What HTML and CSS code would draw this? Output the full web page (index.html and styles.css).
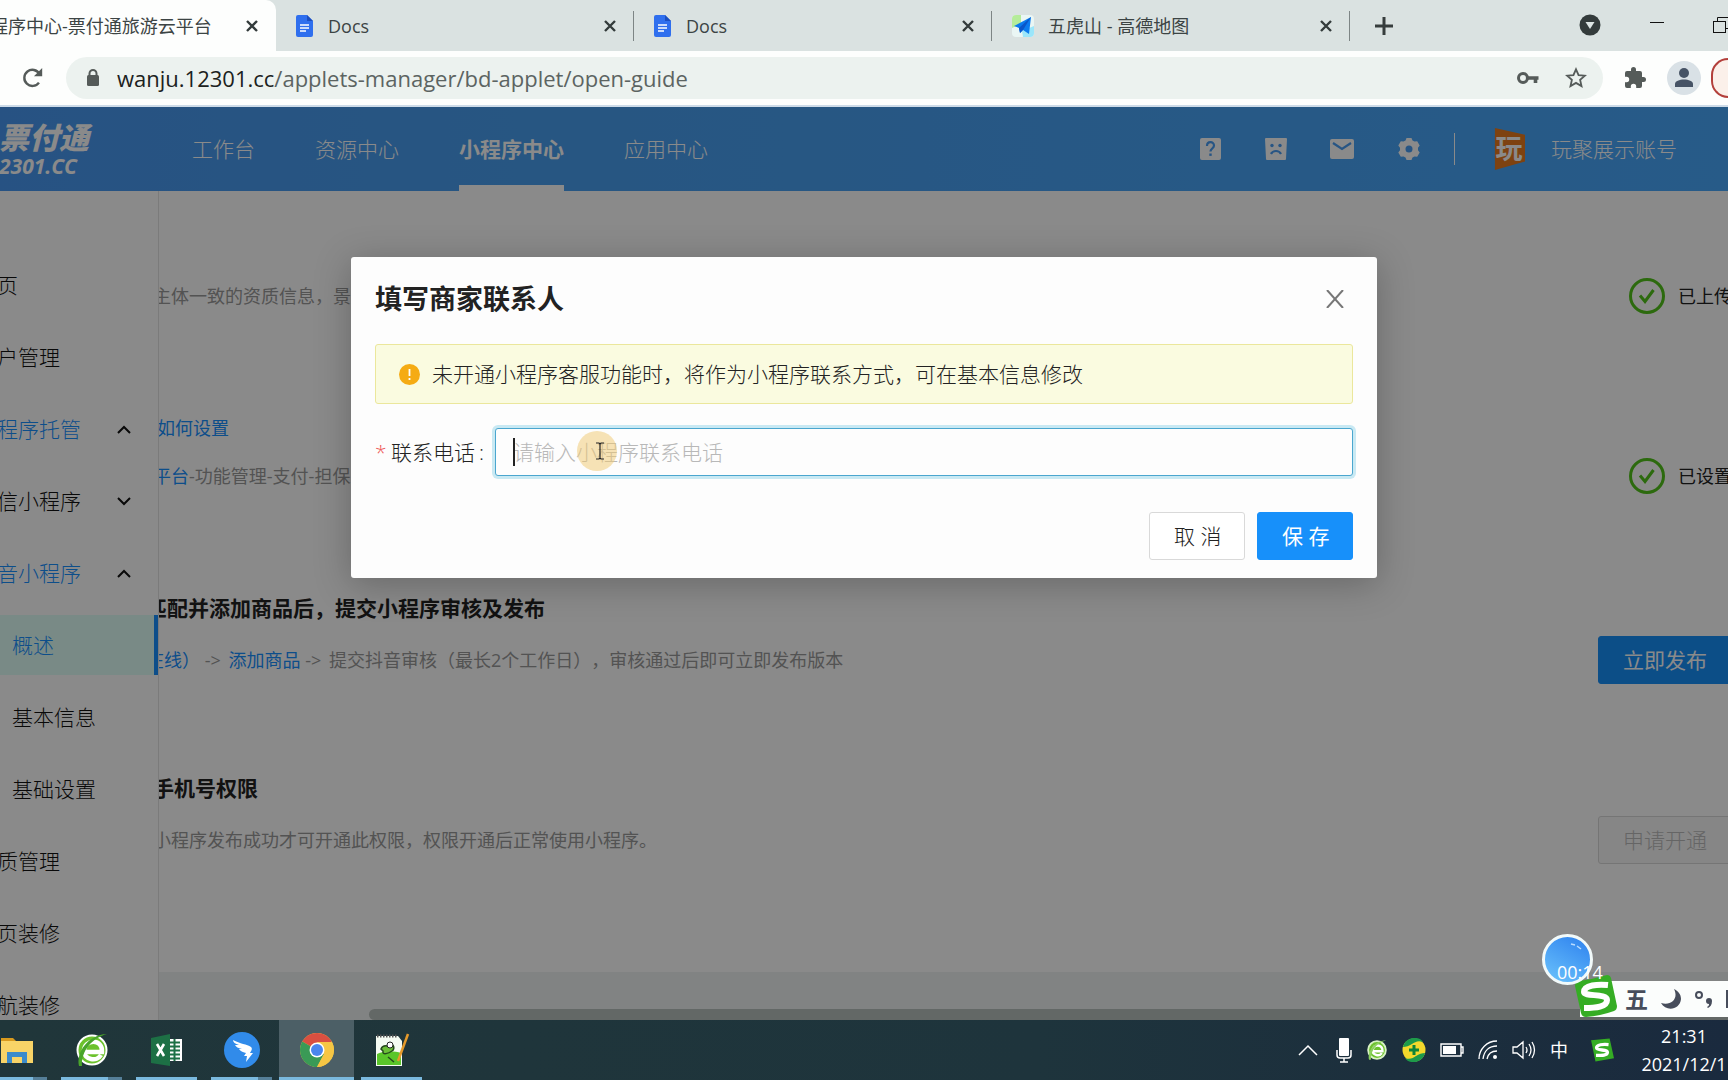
FILE: index.html
```html
<!DOCTYPE html>
<html lang="zh-CN">
<head>
<meta charset="utf-8">
<title>小程序中心-票付通旅游云平台</title>
<link rel="stylesheet" href="styles.css">
</head>
<body>
<header class="tabs">
  <div class="tab tab-active"><span class="tab-title">程序中心-票付通旅游云平台</span><button class="tab-close" aria-label="关闭"><svg width="12" height="12" viewBox="0 0 12 12"><path d="M1 1l10 10M11 1L1 11"/></svg></button></div>
  <div class="tab"><svg width="18" height="22" viewBox="0 0 18 22"><path d="M2 0h9l6 6v14a2 2 0 0 1-2 2H2a2 2 0 0 1-2-2V2a2 2 0 0 1 2-2z" fill="#2f6fee"/><path d="M11 0l6 6h-6z" fill="#1c4fc0"/><path d="M4 10h9M4 13h9M4 16h6" stroke="#fff" stroke-width="1.5"/></svg><span class="tab-title">Docs</span><button class="tab-close" aria-label="关闭"><svg width="12" height="12" viewBox="0 0 12 12"><path d="M1 1l10 10M11 1L1 11"/></svg></button></div>
  <div class="tab"><svg width="18" height="22" viewBox="0 0 18 22"><path d="M2 0h9l6 6v14a2 2 0 0 1-2 2H2a2 2 0 0 1-2-2V2a2 2 0 0 1 2-2z" fill="#2f6fee"/><path d="M11 0l6 6h-6z" fill="#1c4fc0"/><path d="M4 10h9M4 13h9M4 16h6" stroke="#fff" stroke-width="1.5"/></svg><span class="tab-title">Docs</span><button class="tab-close" aria-label="关闭"><svg width="12" height="12" viewBox="0 0 12 12"><path d="M1 1l10 10M11 1L1 11"/></svg></button></div>
  <div class="tab"><svg width="22" height="22" viewBox="0 0 22 22"><rect width="22" height="22" rx="4" fill="#eaf6f4"/><path d="M4 0h5v9l-9 4V4a4 4 0 0 1 4-4z" fill="#b5ec9a"/><path d="M10 16l12-5v7a4 4 0 0 1-4 4h-7z" fill="#9be6fa"/><path d="M19 2L2 11l5 2 1 5 3-3 6 4z" fill="#0b7bee"/><path d="M19 2L7 13l1 5 3-3z" fill="#0a56c8"/></svg><span class="tab-title">五虎山 - 高德地图</span><button class="tab-close" aria-label="关闭"><svg width="12" height="12" viewBox="0 0 12 12"><path d="M1 1l10 10M11 1L1 11"/></svg></button></div>
  <button class="new-tab" aria-label="新标签页"><svg width="18" height="18" viewBox="0 0 18 18"><path d="M9 0v18M0 9h18" stroke="#363d3d" stroke-width="3"/></svg></button>
  <div class="window-controls">
    <button aria-label="搜索标签页"><svg width="22" height="22" viewBox="0 0 22 22"><circle cx="11" cy="11" r="10.5" fill="#333b3b"/><path d="M6.500 8h9L11 15z" fill="#dde5e4"/></svg></button>
    <button aria-label="最小化"><svg width="16" height="16" viewBox="0 0 16 16"><path d="M1 5.500h14" stroke="#111" stroke-width="1"/></svg></button>
    <button aria-label="还原"><svg width="18" height="16" viewBox="0 0 18 16" fill="none" stroke="#111"><rect x=".5" y="4.500" width="12" height="11"/><path d="M4.500 4V.5h13v11H13"/></svg></button>
  </div>
</header>
<div class="toolbar">
  <button class="reload" aria-label="重新加载"><svg width="22" height="22" viewBox="0 0 24 24"><path d="M18.500 17A8.800 8.800 0 1 1 19 7.500" fill="none" stroke="#555b59" stroke-width="2.600"/><path d="M22 1v9h-9z" fill="#555b59"/></svg></button>
  <div class="omnibox">
    <svg width="14" height="18" viewBox="0 0 14 18"><rect x="1" y="6" width="12" height="11" rx="1.500" fill="#555b59"/><path d="M3.500 7V4.500a3.500 3.500 0 0 1 7 0V7" fill="none" stroke="#555b59" stroke-width="2"/></svg>
    <span class="url"><b>wanju.12301.cc</b>/applets-manager/bd-applet/open-guide</span>
    <svg width="22" height="14" viewBox="0 0 22 14"><circle cx="6" cy="7" r="4.500" fill="none" stroke="#555b59" stroke-width="3"/><path d="M10 7h11.500M18.500 7v5" stroke="#555b59" stroke-width="3.600" fill="none"/></svg>
    <svg width="22" height="22" viewBox="0 0 24 24"><path d="M12 2.500l2.800 6.300 6.900.7-5.200 4.600 1.500 6.700-6-3.500-6 3.500 1.500-6.700-5.200-4.600 6.900-.7z" fill="none" stroke="#555b59" stroke-width="2"/></svg>
  </div>
  <svg width="24" height="24" viewBox="0 0 24 24"><path d="M20.500 11H19V7a2 2 0 0 0-2-2h-4V3.500a2.500 2.500 0 0 0-5 0V5H4a2 2 0 0 0-2 2v3.800h1.500a2.700 2.700 0 0 1 0 5.400H2V20a2 2 0 0 0 2 2h3.800v-1.500a2.700 2.700 0 0 1 5.400 0V22H17a2 2 0 0 0 2-2v-4h1.500a2.500 2.500 0 0 0 0-5z" fill="#555b59"/></svg>
  <svg width="34" height="34" viewBox="0 0 34 34"><circle cx="17" cy="17" r="17" fill="#d9e1e6"/><circle cx="17" cy="12" r="5" fill="#465365"/><path d="M8 26v-3c0-6 18-6 18 0v3z" fill="#465365"/></svg>
  <span class="update"></span>
</div>
<div class="viewport">
  <div class="app">
    <nav class="topnav">
      <div class="brand"><strong>票付通</strong><span>2301.CC</span></div>
      <a href="#">工作台</a><a href="#">资源中心</a><a href="#" class="current">小程序中心</a><a href="#">应用中心</a>
      <div class="tools">
        <svg width="22" height="22" viewBox="0 0 22 22"><rect width="21" height="22" rx="2" fill="#fff"/><path d="M7 8c0-5 7-5 7-.5 0 3-3.500 3-3.500 6" fill="none" stroke="#489df4" stroke-width="2.200"/><rect x="9.300" y="15.500" width="2.400" height="2.400" fill="#489df4"/></svg>
        <svg width="22" height="22" viewBox="0 0 22 22"><path d="M1 0h20a1 1 0 0 1 1 1l-1 20a1 1 0 0 1-1 1H2a1 1 0 0 1-1-1L0 1a1 1 0 0 1 1-1z" fill="#fff"/><g fill="#489df4"><circle cx="7" cy="7.500" r="1.700"/><circle cx="15" cy="7.500" r="1.700"/></g><path d="M6 16c2-4 8-4 10 0" fill="none" stroke="#489df4" stroke-width="2.200"/></svg>
        <svg width="24" height="20" viewBox="0 0 24 20"><rect width="24" height="20" rx="2" fill="#fff"/><path d="M3 4l9 6 9-6" fill="none" stroke="#489df4" stroke-width="2.200"/></svg>
        <svg width="24" height="24" viewBox="0 0 24 24"><path d="M9.500 1h5l1 2.500 2 1 2.700-.3 2.500 4.200L21 10.700v2.600l1.700 2.300-2.500 4.200-2.700-.3-2 1-1 2.500h-5l-1-2.500-2-1-2.700.3-2.500-4.200L3 13.300v-2.600L1.300 8.400l2.500-4.200 2.700.3 2-1z" fill="#fff"/><circle cx="12" cy="12" r="3.500" fill="#489df4"/></svg>
      </div>
      <div class="account"><span class="shop">玩</span>玩聚展示账号</div>
    </nav>
    <div class="body">
      <aside class="side">
        <a href="#">页</a>
        <a href="#">户管理</a>
        <a href="#" class="open">程序托管<svg width="14" height="9" viewBox="0 0 14 9"><path d="M1 8l6-6 6 6"/></svg></a>
        <a href="#">信小程序<svg width="14" height="9" viewBox="0 0 14 9"><path d="M1 1l6 6 6-6"/></svg></a>
        <a href="#" class="open">音小程序<svg width="14" height="9" viewBox="0 0 14 9"><path d="M1 8l6-6 6 6"/></svg></a>
        <a href="#" class="sub selected">概述</a>
        <a href="#" class="sub">基本信息</a>
        <a href="#" class="sub">基础设置</a>
        <a href="#">质管理</a>
        <a href="#">页装修</a>
        <a href="#">航装修</a>
      </aside>
      <main class="content">
        <div class="card">
          <section class="step compact">
            <h3></h3>
            <p>主体一致的资质信息，景</p>
            <div class="status"><svg width="36" height="36" viewBox="0 0 36 36"><circle cx="18" cy="18" r="16.500"/><path d="M11 17.500l5 6 8.500-11.500"/></svg>已上传</div>
          </section>
          <section class="step compact">
            <h3><a href="#">如何设置</a></h3>
            <p><a href="#">平台</a>-功能管理-支付-担保</p>
            <div class="status"><svg width="36" height="36" viewBox="0 0 36 36"><circle cx="18" cy="18" r="16.500"/><path d="M11 17.500l5 6 8.500-11.500"/></svg>已设置</div>
          </section>
          <section class="step outdent">
            <h3>匹配并添加商品后，提交小程序审核及发布</h3>
            <p><a href="#">在线）</a> <span class="arrow">-&gt;</span> <a href="#">添加商品</a> <span class="arrow">-&gt;</span> 提交抖音审核（最长2个工作日），审核通过后即可立即发布版本</p>
            <button class="btn primary">立即发布</button>
          </section>
          <section class="step">
            <h3>手机号权限</h3>
            <p>小程序发布成功才可开通此权限，权限开通后正常使用小程序。</p>
            <button class="btn disabled" disabled>申请开通</button>
          </section>
        </div>
      </main>
    </div>
  </div>
  <div class="hscroll"></div>
  <div class="mask">
    <form class="modal" role="dialog" aria-labelledby="dlg-title">
      <div class="modal-head"><h2 id="dlg-title">填写商家联系人</h2><button type="button" class="close" aria-label="关闭"><svg width="18" height="18" viewBox="0 0 18 18"><path d="M1 0l16 18M17 0L1 18"/></svg></button></div>
      <div class="alert"><svg width="21" height="21" viewBox="0 0 21 21"><circle cx="10.500" cy="10.500" r="10.500" fill="#f5ab14"/><path d="M10.500 5v7M10.500 14v2" stroke="#fff" stroke-width="1.800"/></svg>未开通小程序客服功能时，将作为小程序联系方式，可在基本信息修改</div>
      <div class="field"><label for="phone"><i>*</i>联系电话<em>:</em></label>
        <div class="control"><input id="phone" type="text" placeholder="请输入小程序联系电话"><span class="caret"></span><span class="pointer"><svg width="8" height="18" viewBox="0 0 8 18"><path d="M0 1h3l1 1 1-1h3M0 17h3l1-1 1 1h3M4 2v14" fill="none" stroke="#222" stroke-width="1.200"/></svg></span></div></div>
      <div class="actions"><button type="button" class="btn">取 消</button><button type="button" class="btn primary">保 存</button></div>
    </form>
  </div>
  <div class="recorder"><svg width="45" height="45" viewBox="0 0 45 45"><path d="M26 7l4 1M32 9l4 3" stroke="#b9dcff" stroke-width="1.500"/></svg><span>00:14</span></div>
  <div class="ime">
    <svg class="ime-logo" width="44" height="42" viewBox="0 0 44 42"><path d="M5 6Q20 4 33 0q3 0 4 3l6 28q0 4-3 5-14 5-28 6-4 0-5-4L1 11q0-4 4-5z" fill="#35ad24"/><path d="M34 10c-10-1-24 0-24 7 0 5 23 1 23 8 0 7-11 8-23 8" fill="none" stroke="#fff" stroke-width="6"/></svg>
    <b>五</b>
    <svg width="22" height="22" viewBox="0 0 22 22"><path d="M14 1c5 10-3 17-13 14 5 9 19 7 20-4 0-5-3-8-7-10z" fill="#474d5b"/></svg>
    <svg width="20" height="18" viewBox="0 0 20 18"><circle cx="5" cy="5" r="3" fill="none" stroke="#474d5b" stroke-width="2"/><path d="M13 17c2-1 2-2 2-3a3 3 0 1 1 3-3c0 4-2 6-4 7z" fill="#474d5b"/></svg>
    <svg width="8" height="18" viewBox="0 0 8 18"><path d="M8 1H1v16h7M4 5h4M4 9h4M4 13h4" fill="none" stroke="#474d5b" stroke-width="2"/></svg>
  </div>
</div>
<footer class="taskbar">
  <div class="apps">
    <button class="multi" aria-label="文件资源管理器"><svg width="36" height="36" viewBox="0 0 36 36"><path d="M2 6h12l3 3H2z" fill="#d89a1e"/><path d="M2 9h32v22H2z" fill="#f8d467"/><path d="M8 31V20h20v11h-5v-6h-10v6z" fill="#3b8bcb"/></svg></button>
    <button class="multi" aria-label="浏览器"><svg width="36" height="36" viewBox="0 0 36 36"><circle cx="18" cy="18" r="14.500" fill="#6cc22c" stroke="#fff" stroke-width="2"/><path d="M9 20h19c1-14-18-13-18-1 0 9 13 11 17 4" fill="none" stroke="#fff" stroke-width="4.500"/><path d="M5 34C2 20 14 3 33 2 18 6 7 19 8 34z" fill="#49a52b"/></svg></button>
    <button aria-label="Excel"><svg width="36" height="36" viewBox="0 0 36 36"><rect x="20" y="7" width="13" height="22" fill="#fff"/><path d="M20 10.500h11M20 14.500h11M20 18.500h11M20 22.500h11M20 26.500h11M25.500 7v22" stroke="#1d7045" stroke-width="2"/><path d="M2 6l19-4v32L2 31z" fill="#1d7045"/><path d="M8 12l7 12M15 12L8 24" stroke="#fff" stroke-width="2.600"/></svg></button>
    <button class="multi" aria-label="钉钉"><svg width="36" height="36" viewBox="0 0 36 36"><circle cx="18" cy="18" r="18" fill="#318bea"/><path d="M9 8c7 4 14 4 18 7 2 2 0 4-1 6h3l-7 9 1-6h-3l2-3c-5-1-6-3-7-4l3 0c-4-1-6-2-7-4l4 0c-4-1-6-3-6-5z" fill="#fff"/></svg></button>
    <button class="active" aria-label="Chrome"><svg width="36" height="36" viewBox="0 0 36 36"><circle cx="18" cy="18" r="17" fill="#f6c644"/><path d="M18 18L3.300 9.500A17 17 0 0 1 32.700 9.500z" fill="#d94f41"/><path d="M3.300 9.500A17 17 0 0 0 18 35l7-13-7-4z" fill="#3a9a56"/><path d="M18 10h15a17 17 0 0 1-15 25l7-13z" fill="#f6c644"/><circle cx="18" cy="18" r="7.500" fill="#fff"/><circle cx="18" cy="18" r="6" fill="#4a86ee"/></svg></button>
    <button aria-label="Notepad++"><svg width="36" height="36" viewBox="0 0 36 36"><path d="M2 4h22l4 5 0 25H2z" fill="#f5fbf3"/><path d="M3 4h20" stroke="#555" stroke-width="3" stroke-dasharray="1.500 1.500"/><path d="M3 22c8-4 18-3 24-1v12H3z" fill="#5ac62a"/><path d="M7 17c2-5 7-3 9-2 4-5 5 2 2 4s-10 5-9 0zM14 25l6 5" fill="#6bbf38" stroke="#254a1c" stroke-width="1.500"/><circle cx="16" cy="13" r="3" fill="#fff" stroke="#222"/><path d="M34 2L24 29" stroke="#e59a2b" stroke-width="2.500"/></svg></button>
  </div>
  <div class="tray">
    <svg width="20" height="12" viewBox="0 0 20 12"><path d="M1 11l9-9 9 9" fill="none" stroke="#fff" stroke-width="1.500"/></svg>
    <svg width="16" height="26" viewBox="0 0 16 26"><rect x="3" y="1" width="10" height="18" rx="1" fill="#fff"/><path d="M1 13v5q0 3 3 3h8q3 0 3-3v-5M8 21v4M4 25h8" fill="none" stroke="#fff" stroke-width="1.500"/></svg>
    <svg width="22" height="24" viewBox="0 0 36 36"><circle cx="18" cy="18" r="14.500" fill="#6cc22c" stroke="#d8f2c4" stroke-width="3"/><path d="M10 20h17c1-13-16-12-16-1 0 8 11 10 15 4" fill="none" stroke="#fff" stroke-width="4"/><path d="M5 34C2 20 14 3 33 2 18 6 7 19 8 34z" fill="#8bd05e"/></svg>
    <svg width="24" height="24" viewBox="0 0 24 24"><circle cx="12" cy="12" r="11.500" fill="#f3d92c"/><path d="M1 9C3-1 17-3 21 4c-5-2-8 0-11 2S4 9 1 9zM23 15c-2 10-16 12-20 5 5 2 8 0 11-2s6-3 9-3z" fill="#1d9a4a"/><path d="M12 7v10M7 12h10" stroke="#0d8439" stroke-width="3"/></svg>
    <svg width="24" height="14" viewBox="0 0 24 14"><path d="M1 1h20v12H1zM21 4h2v6h-2" fill="none" stroke="#fff" stroke-width="1.400"/><rect x="3" y="3" width="13" height="8" fill="#fff"/></svg>
    <svg width="20" height="20" viewBox="0 0 20 20"><g fill="none" stroke="#fff" stroke-width="1.300"><path d="M1 19C1 9 9 1 19 1M5 19C6 11 11 6 19 6M9 19c1-5 5-8 10-8"/></g><circle cx="17" cy="17" r="2" fill="#fff"/></svg>
    <svg width="24" height="20" viewBox="0 0 24 20"><path d="M1 7h4l6-5v16l-6-5H1zM14 7q2 3 0 6M17 4q4 6 0 12M20 2q5 8 0 16" fill="none" stroke="#fff" stroke-width="1.300"/></svg>
    <span class="lang">中</span>
    <svg width="24" height="24" viewBox="0 0 44 42"><path d="M2 3L36 0l8 36-34 6z" fill="#35ad24"/><path d="M34 11c-10-1-22 0-22 6 0 6 20 2 20 8s-10 6-21 6" fill="none" stroke="#fff" stroke-width="6"/></svg>
    <div class="clock"><span>21:31</span><span>2021/12/1</span></div>
  </div>
</footer>
</body>
</html>
```
FILE: styles.css
```css
* { box-sizing: border-box; }
body {
  margin: 0;
  height: 100vh;
  display: flex;
  flex-direction: column;
  overflow: hidden;
  font-family: "Open Sans", "Noto Sans CJK SC", sans-serif;
  font-size: 21px;
  line-height: 32px;
  color: #222;
  background: #fdfefd;
  text-spacing-trim: space-all;
}
button { font: inherit; color: inherit; border: 0; background: none; padding: 0; }
a { text-decoration: none; color: #1890ff; }
h2, h3, p { margin: 0; }
svg { display: block; flex: none; }

/* browser tabs */
.tabs { display: flex; height: 51px; background: #dae2e1; flex: none; }
.tab {
  flex: 0 1 358px;
  display: flex;
  align-items: center;
  gap: 14px;
  padding: 0 18px 0 20px;
  font-size: 18px;
  color: #3c4444;
  position: relative;
  white-space: nowrap;
}
.tab:not(.tab-active)::after {
  content: "";
  position: absolute;
  right: 0;
  top: 11px;
  width: 1px;
  height: 30px;
  background: #7d8585;
}
.tab-active { flex-basis: 276px; background: #fdfefd; border-radius: 0 10px 0 0; padding-left: 0; }
.tab-active .tab-title { margin-left: -10px; }
.tab-title { flex: 1; }
.tab-close svg { stroke: #333b3b; stroke-width: 2.4; }
.new-tab { margin-left: 25px; }
.window-controls { margin-left: auto; display: flex; align-items: center; gap: 48px; padding-bottom: 2px; margin-right: -3px; }

/* address bar */
.toolbar {
  display: flex;
  align-items: center;
  gap: 20px;
  height: 56px;
  padding-left: 22px;
  border-bottom: 2px solid #cddbe8;
  flex: none;
}
.omnibox {
  flex: 1;
  display: flex;
  align-items: center;
  gap: 26px;
  height: 42px;
  border-radius: 21px;
  background: #ecf2ef;
  padding: 0 16px 0 20px;
  margin-left: 2px;
}
.url { flex: 1; color: #5c6462; margin-left: -9px; font-size: 22px; }
.url b { font-weight: 400; color: #1b2120; }
.update { width: 17px; height: 40px; border: 2px solid #b3403c; border-right: 0; border-radius: 20px 0 0 20px; background: #fbf0ea; margin-left: -10px; }

/* web page, scrolled slightly to the right */
.viewport { flex: 1; min-height: 0; position: relative; overflow: hidden; }
.app { margin: 0 -4px 0 -3px; height: 100%; display: flex; flex-direction: column; background: #fff; }
.topnav {
  height: 84px;
  flex: none;
  display: flex;
  align-items: center;
  gap: 60px;
  padding-right: 55px;
  color: #fff;
  background: linear-gradient(90deg, #4898f2, #489ff0 30%, #48a8fc);
}
.topnav a { color: #fff; line-height: 84px; font-weight: 300; }
.topnav .current { font-weight: 700; box-shadow: inset 0 -6px #fff; }
.brand { width: 135px; display: flex; flex-direction: column; font-style: italic; line-height: 24px; font-weight: 700; padding: 2px 0 0 2px; color: #fff; }
.brand strong { font-size: 30px; line-height: 32px; }
.tools { display: flex; align-items: center; gap: 43px; margin-left: auto; padding-right: 33px; border-right: 1px solid #fff; height: 32px; }
.account { display: flex; align-items: center; gap: 26px; margin-left: -22px; font-weight: 300; }
.shop { width: 32px; line-height: 42px; text-align: center; font-size: 27px; font-weight: 700; background: #e97a1e; clip-path: polygon(6% 0, 100% 16%, 100% 80%, 6% 100%); }

.body { flex: 1; display: flex; min-height: 0; }
.side { width: 162px; flex: none; padding-top: 64px; border-right: 1px solid #e4e4e4; overflow: hidden; }
.side a {
  display: flex;
  align-items: center;
  justify-content: space-between;
  height: 60px;
  margin-bottom: 12px;
  padding-right: 27px;
  color: #111;
  font-weight: 300;
}
.side a svg { fill: none; stroke: #111; stroke-width: 2; }
.side a.open { color: #1890ff; }
.side a.sub { padding-left: 15px; }
.side a.selected { color: #1890ff; background: #dffff8; border-right: 4px solid #1890ff; }

.content { flex: 1; min-width: 0; background: #eff2f2; overflow: hidden; }
.card { background: #fff; padding: 41px 0 20px; }
.step {
  height: 180px;
  display: grid;
  grid-template: 32px 28px / 1fr auto;
  row-gap: 22px;
  align-content: start;
  align-items: center;
  margin-left: -6px;
  white-space: nowrap;
}
.step.compact { row-gap: 18px; }
.step.compact h3 { padding-left: 4px; font-size: 18px; font-weight: 400; }
.step.outdent { margin-left: -13px; }
.step h3 { grid-column: 1 / 3; font-size: 21px; }
.step p { font-size: 18px; line-height: 28px; color: #999; }
.arrow { margin-right: 3px; }
.step .btn, .status { margin: -10px 0; }
.status { display: flex; align-items: center; gap: 13px; font-size: 18px; }
.status svg { fill: none; stroke: #52c41a; stroke-width: 3; }

.btn {
  height: 48px;
  padding: 0 24px;
  border: 1px solid #d9d9d9;
  border-radius: 3px;
  background: #fff;
  font-weight: 300;
  white-space: nowrap;
}
.btn.primary { background: #1790fa; border-color: #1790fa; color: #fff; font-weight: 400; }
.btn.disabled { background: #f7f7f7; color: #bbb; }
.hscroll { position: absolute; left: 369px; right: 0; bottom: 0; height: 11px; border-radius: 6px 0 0 6px; background: #b8c0bc; }

/* dialog */
.mask { position: absolute; inset: 0; padding: 150px 24px 0; background: rgba(0, 0, 0, .46); }
.modal { width: 100%; max-width: 1026px; margin: 0 auto; padding: 24px 24px 18px; border-radius: 3px; background: #fdfdfd; box-shadow: 0 6px 36px rgba(0, 0, 0, .25); }
.modal-head { display: flex; justify-content: space-between; align-items: center; padding-right: 9px; margin-bottom: 28px; height: 35px; }
.modal h2 { font-size: 27px; }
.close svg { stroke: #777; stroke-width: 2; }
.alert { display: flex; align-items: center; gap: 12px; height: 60px; padding: 0 23px; border: 1px solid #ebe79c; border-radius: 3px; background: #fafbe0; font-weight: 300; }
.field { display: flex; align-items: center; margin: 24px 0 36px; }
.field label { width: 120px; flex: none; font-weight: 300; }
.field i { font-style: normal; color: #ee5a58; display: inline-block; width: 16px; }
.field em { font-style: normal; padding-left: 4px; }
.control { flex: 1; position: relative; }
.control input { display: block; width: 100%; height: 48px; border: 1px solid #4ba6cf; border-radius: 3px; background: #fdfdfd; padding: 0 17px; font: inherit; font-weight: 300; box-shadow: 0 0 0 3px #c9e9f3; outline: 0; }
.control input::placeholder { color: #b8b8b8; }
.caret { position: absolute; left: 18px; top: 10px; width: 2px; height: 28px; background: #222; }
.pointer { position: absolute; left: 82px; top: 3px; width: 40px; height: 40px; border-radius: 50%; background: rgba(240, 200, 110, .5); display: flex; align-items: center; justify-content: center; padding-left: 5px; }
.actions { display: flex; justify-content: flex-end; gap: 12px; }
.actions .btn { width: 96px; }

/* floating desktop widgets */
.recorder { position: absolute; right: 135px; bottom: 35px; width: 51px; height: 51px; border-radius: 50%; border: 3px solid #f2fafa; background: linear-gradient(210deg, #2c80ee, #6cc4fc); color: #fff; font-size: 18px; z-index: 2; }
.recorder span { position: absolute; left: 12px; top: 21px; line-height: 28px; }
.ime { position: absolute; right: 0; bottom: 3px; height: 36px; width: 148px; display: flex; align-items: center; gap: 12px; background: #fbfdfc; padding-left: 45px; color: #474d5b; font-size: 23px; }
.ime-logo { position: absolute; left: -6px; bottom: 0; }

/* taskbar */
.taskbar { height: 60px; flex: none; display: flex; justify-content: space-between; background: linear-gradient(90deg, #20363a, #1e343c 60%, #1a2a3e); color: #fff; }
.apps { display: flex; margin-left: -21px; }
.apps button { width: 75px; display: flex; align-items: center; justify-content: center; position: relative; }
.apps button::after { content: ""; position: absolute; left: 7px; right: 7px; bottom: 0; height: 3px; background: #7ab9de; }
.apps .multi::after { background: linear-gradient(90deg, #7ab9de 47px, #557f98 47px); }
.apps .active { background: #4c5f66; }
.apps .active::after { left: 0; right: 0; }
.tray { display: flex; align-items: center; gap: 14px; }
.tray .lang { font-size: 18px; }
.tray .lang + svg { margin-left: 8px; margin-right: 12px; }
.tray > :first-child { margin-right: 4px; }
.clock { display: flex; flex-direction: column; align-items: center; font-size: 18px; line-height: 28px; width: 88px; }
```
